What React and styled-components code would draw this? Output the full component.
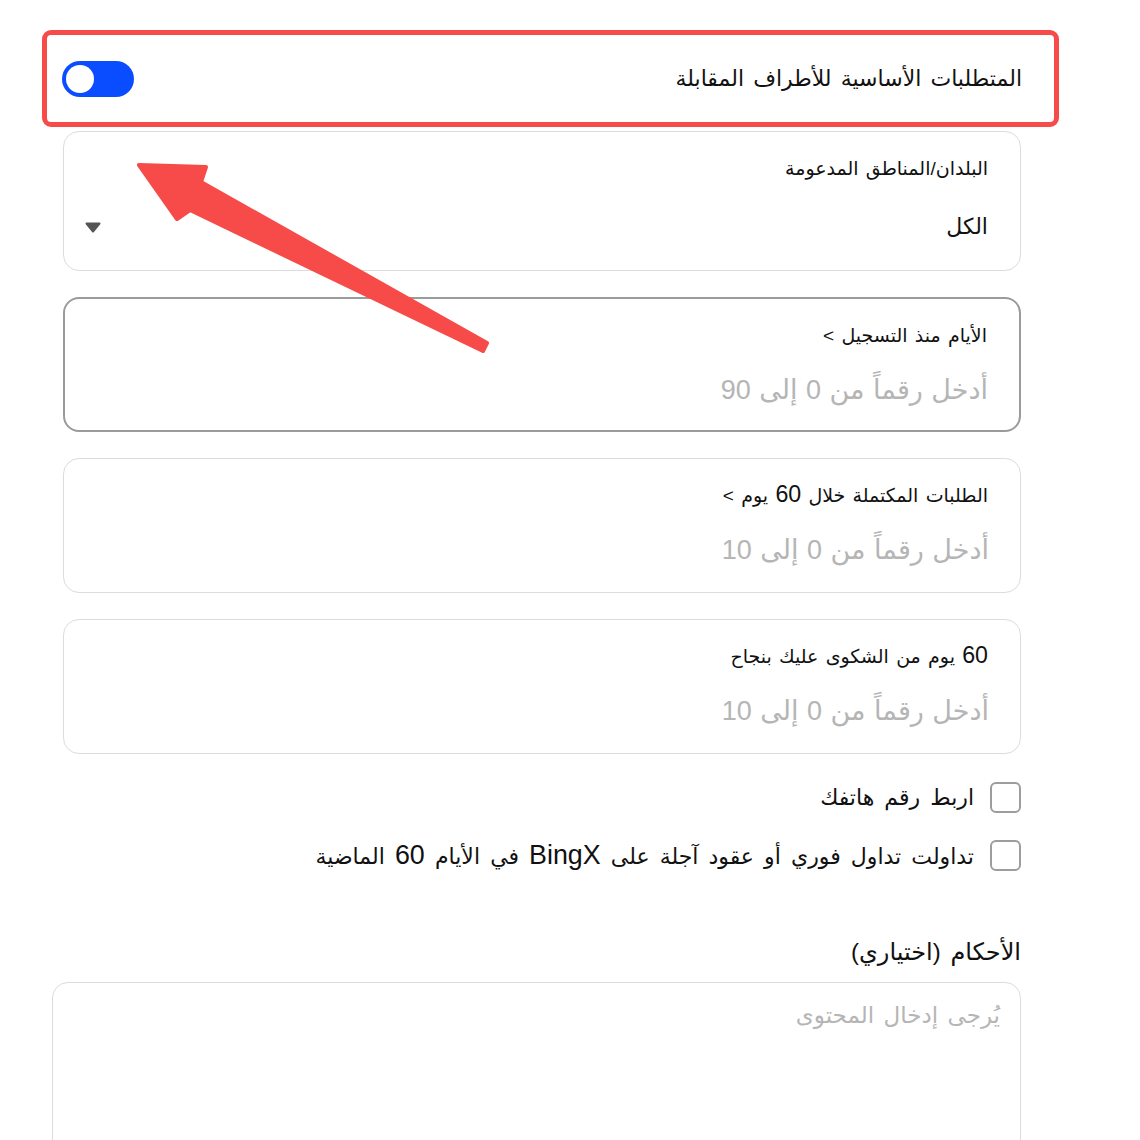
import React from "react";
import styled, { createGlobalStyle } from "styled-components";

const Global = createGlobalStyle`
  html, body { margin: 0; padding: 0; background: #fff; }
  body { font-family: "Liberation Sans", "DejaVu Sans", sans-serif; color: #111; }
  * { box-sizing: border-box; }
`;

const Page = styled.div`
  position: relative;
  width: 1140px;
  height: 1140px;
  overflow: hidden;
  padding-top: 30px;
`;

const Column = styled.div`
  direction: rtl;
  width: 1017px;
  margin-left: 42px;
  display: flex;
  flex-direction: column;
`;

const Highlight = styled.div`
  height: 97px;
  border: 5px solid #f64b48;
  border-radius: 9px;
  padding: 0 32px 0 15px;
  display: flex;
  align-items: center;
  justify-content: space-between;
`;

const Title = styled.div`
  font-size: 22px;
  word-spacing: 3px;
  color: #111;
`;

const Toggle = styled.div`
  width: 72px;
  height: 36px;
  border-radius: 18px;
  background: #0a4cff;
  display: flex;
  align-items: center;
  justify-content: flex-end;
  padding: 0 4px;
`;

const Knob = styled.div`
  width: 28px;
  height: 28px;
  border-radius: 50%;
  background: #fff;
`;

const Form = styled.div`
  padding-right: 38px;
  display: flex;
  flex-direction: column;
`;

const Card = styled.div`
  width: 958px;
  height: ${(p) => p.$h}px;
  margin-top: ${(p) => p.$mt}px;
  border: ${(p) => (p.$active ? "2px solid #9b9b9b" : "1.5px solid #dcdcdc")};
  border-radius: 16px;
  padding: 24px 32px 0 21px;
  display: flex;
  flex-direction: column;
`;

const Label = styled.div`
  font-size: 19px;
  line-height: 26px;
  word-spacing: 2px;
  color: #111;
`;

const Latin = styled.span`
  font-size: 1.22em;
  line-height: 1;
`;

const ValueRow = styled.div`
  margin-top: 31px;
  display: flex;
  align-items: center;
  justify-content: space-between;
`;

const Value = styled.div`
  font-size: 22px;
  line-height: 28px;
  color: #111;
`;

const Placeholder = styled.div`
  margin-top: 25px;
  margin-right: -1px;
  font-size: 27px;
  line-height: 32px;
  word-spacing: 1px;
  color: #b5b5b5;
`;

const CheckRow = styled.label`
  display: flex;
  align-items: center;
  gap: 16px;
  margin-top: ${(p) => p.$mt}px;
  font-size: 22px;
  word-spacing: 4px;
  color: #111;
`;

const Box = styled.span`
  width: 31px;
  height: 31px;
  border: 2px solid #9d9d9d;
  border-radius: 6px;
  flex: none;
`;

const Heading = styled.div`
  margin-top: 66px;
  font-size: 24px;
  line-height: 30px;
  word-spacing: 3px;
  color: #111;
`;

const TextArea = styled.div`
  margin-top: 15px;
  width: 969px;
  height: 200px;
  border: 1.5px solid #dcdcdc;
  border-radius: 16px;
  padding: 19px 20px;
  font-size: 23px;
  word-spacing: 3px;
  color: #b5b5b5;
`;

const Overlay = styled.svg`
  position: absolute;
  left: 0;
  top: 0;
  pointer-events: none;
`;

const Caret = () => (
  <svg width="16" height="11" viewBox="0 0 16 11">
    <path d="M1.5 1.5 H14.5 L8 9.5 Z" fill="#555" stroke="#555" strokeWidth="2" strokeLinejoin="round" />
  </svg>
);

export default function App() {
  return (
    <Page>
      <Global />
      <Column>
        <Highlight>
          <Title>المتطلبات الأساسية للأطراف المقابلة</Title>
          <Toggle>
            <Knob />
          </Toggle>
        </Highlight>
        <Form>
          <Card $h={140} $mt={4}>
            <Label>البلدان/المناطق المدعومة</Label>
            <ValueRow>
              <Value>الكل</Value>
              <Caret />
            </ValueRow>
          </Card>
          <Card $h={135} $mt={26} $active>
            <Label>الأيام منذ التسجيل &gt;</Label>
            <Placeholder>أدخل رقماً من 0 إلى 90</Placeholder>
          </Card>
          <Card $h={135} $mt={26}>
            <Label>الطلبات المكتملة خلال <Latin>60</Latin> يوم &gt;</Label>
            <Placeholder>أدخل رقماً من 0 إلى 10</Placeholder>
          </Card>
          <Card $h={135} $mt={26}>
            <Label><Latin>60</Latin> يوم من الشكوى عليك بنجاح</Label>
            <Placeholder>أدخل رقماً من 0 إلى 10</Placeholder>
          </Card>
          <CheckRow $mt={28}>
            <Box />
            <span>اربط رقم هاتفك</span>
          </CheckRow>
          <CheckRow $mt={27}>
            <Box />
            <span>
              تداولت تداول فوري أو عقود آجلة على <Latin>BingX</Latin> في الأيام <Latin>60</Latin> الماضية
            </span>
          </CheckRow>
          <Heading>الأحكام (اختياري)</Heading>
          <TextArea>يُرجى إدخال المحتوى</TextArea>
        </Form>
      </Column>
      <Overlay width="1140" height="1140" viewBox="0 0 1140 1140">
        <path
          d="M139 165 L206 167 L201 182 L487 343 L483 351 L190 210 L177 219 Z"
          fill="#f64b48"
          stroke="#f64b48"
          strokeWidth="4"
          strokeLinejoin="round"
        />
      </Overlay>
    </Page>
  );
}
